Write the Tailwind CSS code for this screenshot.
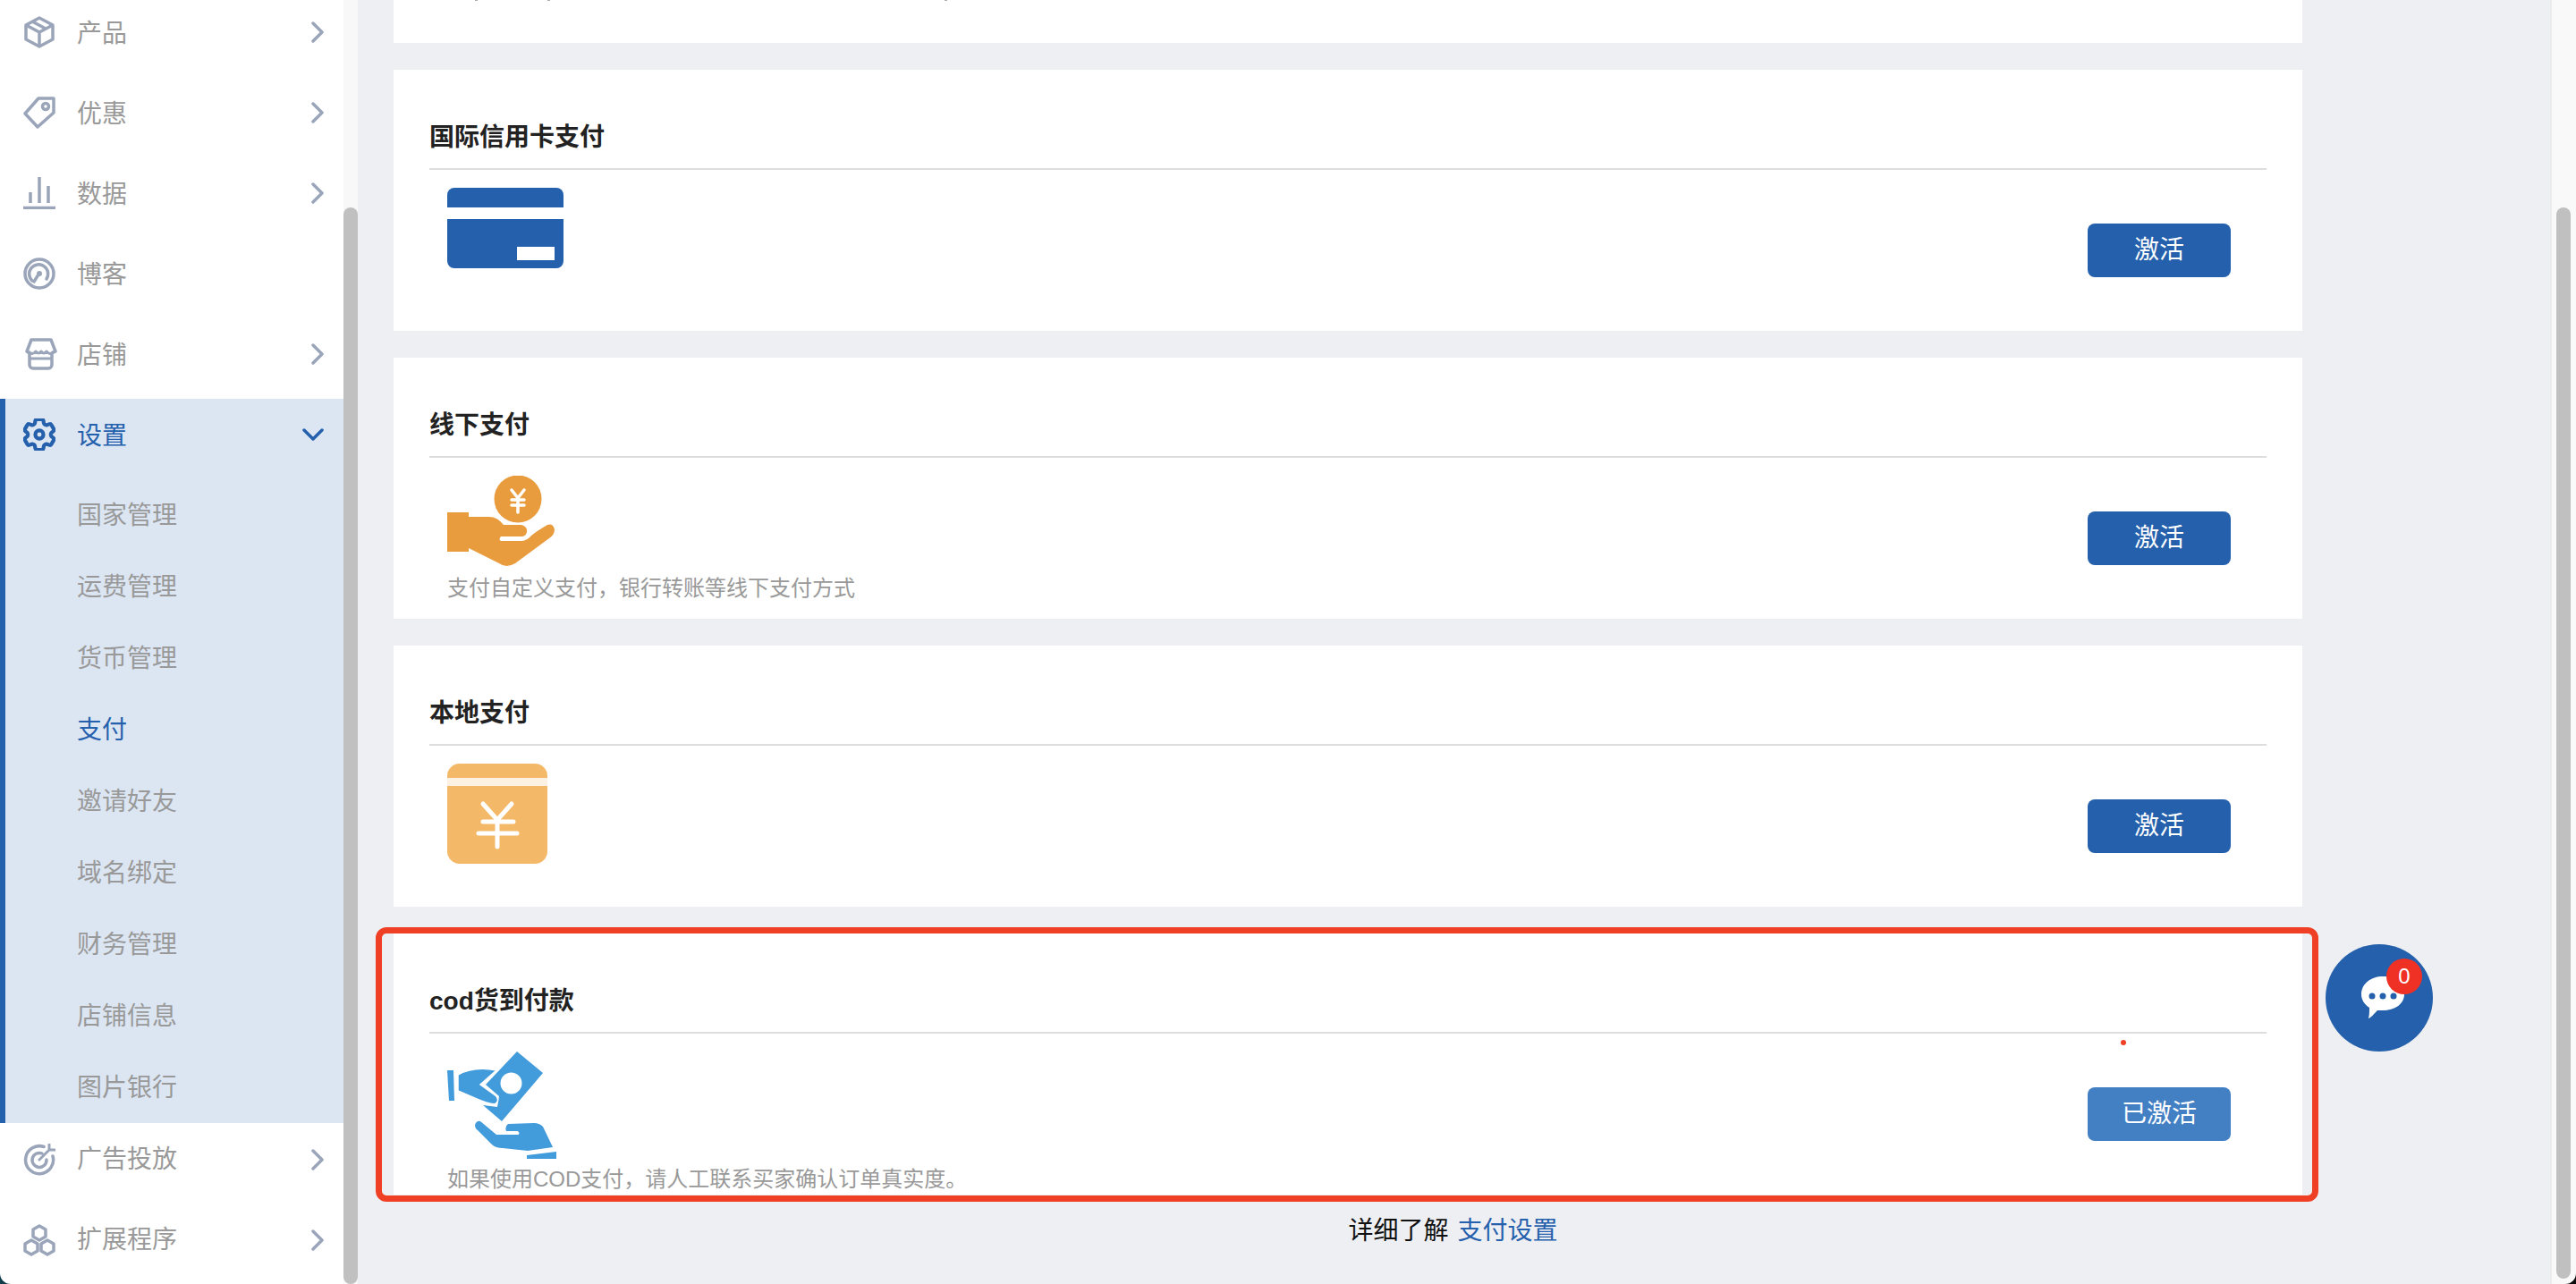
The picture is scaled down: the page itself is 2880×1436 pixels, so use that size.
<!DOCTYPE html>
<html lang="zh-CN">
<head>
  <meta charset="UTF-8" />
  <title>支付设置</title>
  <script src="https://cdn.jsdelivr.net/npm/@tailwindcss/browser@4"></script>
</head>
<body class="bg-linear-to-r from-[#0f3d4a] to-[#0c0c0c] h-[1436px] overflow-hidden font-['Liberation_Sans','Noto_Sans_CJK_SC',sans-serif]">
  <div class="relative flex h-[1436px] overflow-hidden rounded-b-[12px]">

    <!-- Sidebar -->
    <aside class="w-[384px] shrink-0 bg-white overflow-hidden text-[28px] text-[#999999]">
      <div class="-mt-[4px] flex flex-col">
        <a class="flex items-center h-[80px] pl-[26px] pr-[22px]">
          <svg class="w-[36px] h-[36px]" viewBox="0 0 36 36" fill="none" stroke="#9aa5ba" stroke-width="3.500" stroke-linejoin="round"><path d="M18 2 33 10V26L18 34 3 26V10Z"/><path d="M3 10 18 18 33 10M18 18V34M10 6 25 14"/></svg>
          <span class="ml-[24px] pt-[4px] flex-1">产品</span>
          <svg class="w-[14px] h-[24px]" viewBox="0 0 14 24" fill="none" stroke="#9aa5ba" stroke-width="3.5" stroke-linecap="round" stroke-linejoin="round"><path d="M2 2 12 12 2 22"/></svg>
        </a>
        <a class="flex items-center h-[80px] mt-[10px] pl-[26px] pr-[22px]">
          <svg class="w-[36px] h-[36px]" viewBox="0 0 36 36" fill="none" stroke="#9aa5ba" stroke-width="3.500" stroke-linejoin="round"><path d="M17 2H34V18L16 34 2 19Z"/><circle cx="25" cy="11" r="3.5"/></svg>
          <span class="ml-[24px] pt-[4px] flex-1">优惠</span>
          <svg class="w-[14px] h-[24px]" viewBox="0 0 14 24" fill="none" stroke="#9aa5ba" stroke-width="3.5" stroke-linecap="round" stroke-linejoin="round"><path d="M2 2 12 12 2 22"/></svg>
        </a>
        <a class="flex items-center h-[80px] mt-[10px] pl-[26px] pr-[22px]">
          <svg class="w-[36px] h-[36px]" viewBox="0 0 36 36" fill="none" stroke="#9aa5ba" stroke-width="3.500"><path d="M0 34.500H36M8 17V29M18 0V29M28 10V29"/></svg>
          <span class="ml-[24px] pt-[4px] flex-1">数据</span>
          <svg class="w-[14px] h-[24px]" viewBox="0 0 14 24" fill="none" stroke="#9aa5ba" stroke-width="3.5" stroke-linecap="round" stroke-linejoin="round"><path d="M2 2 12 12 2 22"/></svg>
        </a>
        <a class="flex items-center h-[80px] mt-[10px] pl-[26px] pr-[22px]">
          <svg class="w-[36px] h-[36px]" viewBox="0 0 36 36" fill="none" stroke="#9aa5ba" stroke-width="3.500" stroke-linecap="round"><circle cx="18" cy="18" r="16"/><path d="M10 26A10.500 10.500 0 1 1 26 24"/><path d="M12 27 17 19"/><circle cx="18" cy="18" r="3" fill="#9aa5ba" stroke="none"/></svg>
          <span class="ml-[24px] pt-[4px] flex-1">博客</span>
        </a>
        <a class="flex items-center h-[80px] mt-[10px] pl-[26px] pr-[22px]">
          <svg class="w-[36px] h-[36px] translate-x-[2px]" viewBox="0 0 36 36" fill="none" stroke="#9aa5ba" stroke-width="3.500" stroke-linejoin="round"><path d="M7 2H29L34 15 30 17V30A4 4 0 0 1 26 34H9A4 4 0 0 1 5 30V17L2 15Z"/><path d="M4 15Q8 20 12 15 15 19 18 15 21 19 24 15 28 20 32 15M5 23H30" stroke-width="3"/></svg>
          <span class="ml-[24px] pt-[4px] flex-1">店铺</span>
          <svg class="w-[14px] h-[24px]" viewBox="0 0 14 24" fill="none" stroke="#9aa5ba" stroke-width="3.5" stroke-linecap="round" stroke-linejoin="round"><path d="M2 2 12 12 2 22"/></svg>
        </a>

        <!-- 设置 -->
        <div class="mt-[10px] h-[810px] bg-[#dce6f3] border-l-[6px] border-[#2560ac]">
          <a class="flex items-center h-[80px] pl-[20px] pr-[22px] text-[#2560ac]">
            <svg class="w-[36px] h-[36px]" viewBox="2.500 2.500 19 19" fill="none" stroke="#2560ac" stroke-width="2.200"><path d="M9.594 3.940c.09-.542.56-.94 1.110-.94h2.593c.55 0 1.020.398 1.110.94l.213 1.281c.063.374.313.686.645.87.074.04.147.083.22.127.325.196.72.257 1.075.124l1.217-.456a1.125 1.125 0 0 1 1.370.49l1.296 2.247a1.125 1.125 0 0 1-.26 1.431l-1.003.827c-.293.241-.438.613-.43.992a7.723 7.723 0 0 1 0 .255c-.008.378.137.75.43.991l1.004.827c.424.35.534.955.26 1.430l-1.298 2.247a1.125 1.125 0 0 1-1.369.491l-1.217-.456c-.355-.133-.75-.072-1.076.124a6.470 6.470 0 0 1-.22.128c-.331.183-.581.495-.644.869l-.213 1.281c-.09.543-.56.94-1.110.94h-2.594c-.55 0-1.019-.398-1.110-.94l-.213-1.281c-.062-.374-.312-.686-.644-.87a6.520 6.520 0 0 1-.22-.127c-.325-.196-.72-.257-1.076-.124l-1.217.456a1.125 1.125 0 0 1-1.369-.49l-1.297-2.247a1.125 1.125 0 0 1 .26-1.431l1.004-.827c.292-.24.437-.613.43-.991a6.932 6.932 0 0 1 0-.255c.007-.38-.138-.751-.43-.992l-1.004-.827a1.125 1.125 0 0 1-.26-1.430l1.297-2.247a1.125 1.125 0 0 1 1.370-.491l1.216.456c.356.133.751.072 1.076-.124.072-.044.146-.086.22-.128.332-.183.582-.495.644-.869l.214-1.280Z"/><circle cx="12" cy="12" r="2.400"/></svg>
            <span class="ml-[24px] pt-[4px] flex-1">设置</span>
            <svg class="w-[24px] h-[14px]" viewBox="0 0 24 14" fill="none" stroke="#2560ac" stroke-width="3.500" stroke-linecap="round" stroke-linejoin="round"><path d="M2 2 12 12 22 2"/></svg>
          </a>
          <ul class="mt-[9px] pl-[80px]">
            <li class="h-[80px] pt-[4px] flex items-center">国家管理</li>
            <li class="h-[80px] pt-[4px] flex items-center">运费管理</li>
            <li class="h-[80px] pt-[4px] flex items-center">货币管理</li>
            <li class="h-[80px] pt-[4px] flex items-center text-[#2560ac]">支付</li>
            <li class="h-[80px] pt-[4px] flex items-center">邀请好友</li>
            <li class="h-[80px] pt-[4px] flex items-center">域名绑定</li>
            <li class="h-[80px] pt-[4px] flex items-center">财务管理</li>
            <li class="h-[80px] pt-[4px] flex items-center">店铺信息</li>
            <li class="h-[80px] pt-[4px] flex items-center">图片银行</li>
          </ul>
        </div>

        <a class="flex items-center h-[80px] mt-[1px] pl-[26px] pr-[22px]">
          <svg class="w-[36px] h-[36px]" viewBox="0 0 36 36" fill="none" stroke="#9aa5ba" stroke-width="3.500" stroke-linecap="round"><path d="M23 3.500A15.500 15.500 0 1 0 33 14"/><path d="M21 11A8 8 0 1 0 26 18"/><path d="M18 18 29 7M29 1V7H35" stroke-width="3"/></svg>
          <span class="ml-[24px] flex-1">广告投放</span>
          <svg class="w-[14px] h-[24px]" viewBox="0 0 14 24" fill="none" stroke="#9aa5ba" stroke-width="3.5" stroke-linecap="round" stroke-linejoin="round"><path d="M2 2 12 12 2 22"/></svg>
        </a>
        <a class="flex items-center h-[80px] mt-[10px] pl-[26px] pr-[22px]">
          <svg class="w-[36px] h-[36px]" viewBox="0 0 36 36" fill="none" stroke="#9aa5ba" stroke-width="3.500" stroke-linejoin="round"><path d="M18 2 25 6V14L18 18 11 14V6Z"/><path d="M9 18 16 22V30L9 34 2 30V22Z"/><path d="M27 18 34 22V30L27 34 20 30V22Z"/></svg>
          <span class="ml-[24px] flex-1">扩展程序</span>
          <svg class="w-[14px] h-[24px]" viewBox="0 0 14 24" fill="none" stroke="#9aa5ba" stroke-width="3.5" stroke-linecap="round" stroke-linejoin="round"><path d="M2 2 12 12 2 22"/></svg>
        </a>
      </div>
    </aside>

    <!-- Sidebar scrollbar -->
    <div class="w-[16px] shrink-0 bg-[#f8f8f8]">
      <div class="mt-[232px] h-[1204px] rounded-[8px] bg-[#c0c0c0]"></div>
    </div>

    <!-- Main -->
    <main class="flex-1 bg-[#eeeff3] pl-[40px]">
      <div class="w-[2134px] flex flex-col gap-[30px]">
        <div class="relative h-[48px] bg-white">
          <div class="absolute top-0 left-[91px] w-[3px] h-[1px] bg-[#aaaaaa]"></div>
          <div class="absolute top-0 left-[172px] w-[3px] h-[1px] bg-[#aaaaaa]"></div>
          <div class="absolute top-0 left-[616px] w-[3px] h-[1px] bg-[#aaaaaa]"></div>
        </div>

        <section class="h-[292px] bg-white px-[40px]">
          <h2 class="pt-[56px] pb-[14px] h-[112px] border-b-2 border-[#dddddd] text-[28px] leading-[40px] font-bold text-[#222222]">国际信用卡支付</h2>
          <div class="flex justify-between pl-[20px] pr-[40px]">
            <svg class="mt-[20px] w-[130px] h-[90px]" viewBox="0 0 130 90"><path d="M0 22V8A8 8 0 0 1 8 0H122A8 8 0 0 1 130 8V22Z" fill="#2560ac"/><path fill-rule="evenodd" d="M0 35H130V82A8 8 0 0 1 122 90H8A8 8 0 0 1 0 82ZM78 66V81H120V66Z" fill="#2560ac"/></svg>
            <button class="mt-[60px] w-[160px] h-[60px] rounded-[8px] bg-[#2560ac] text-white text-[28px]">激活</button>
          </div>
        </section>

        <section class="h-[292px] bg-white px-[40px]">
          <h2 class="pt-[56px] pb-[14px] h-[112px] border-b-2 border-[#dddddd] text-[28px] leading-[40px] font-bold text-[#222222]">线下支付</h2>
          <div class="flex justify-between pl-[20px] pr-[40px]">
            <div class="pt-[20px]">
              <svg class="w-[120px] h-[102px]" viewBox="0 0 120 102">
                <circle cx="79" cy="26" r="26.500" fill="#e99c3e"/>
                <path d="M72 16 79 25 86 16M72 27H86M72 33H86M79 25V41" fill="none" stroke="#fff" stroke-width="3.500" stroke-linecap="round"/>
                <path d="M0 41H24V46H47Q56 46 63 55H83Q90 57 89 63 88 68 83 68H60Q57 71 60 73H84Q90 72 94 67 100 62 112 55 118 53 120 60 120 66 114 70L76 98Q66 104 58 98L24 81V85H0Z" fill="#e99c3e"/>
              </svg>
              <p class="mt-[8px] text-[24px] leading-[32px] text-[#999999]">支付自定义支付，银行转账等线下支付方式</p>
            </div>
            <button class="mt-[60px] w-[160px] h-[60px] rounded-[8px] bg-[#2560ac] text-white text-[28px]">激活</button>
          </div>
        </section>

        <section class="h-[292px] bg-white px-[40px]">
          <h2 class="pt-[56px] pb-[14px] h-[112px] border-b-2 border-[#dddddd] text-[28px] leading-[40px] font-bold text-[#222222]">本地支付</h2>
          <div class="flex justify-between pl-[20px] pr-[40px]">
            <svg class="mt-[20px] w-[112px] h-[112px]" viewBox="0 0 112 112">
              <rect width="112" height="112" rx="14" fill="#f4b968"/>
              <rect y="16" width="112" height="9" fill="#fdf1e3"/>
              <path d="M40 45 56 63 72 45M40 65H74M35 78H78M56 63V93" fill="none" stroke="#fff" stroke-width="5" stroke-linecap="round"/>
            </svg>
            <button class="mt-[60px] w-[160px] h-[60px] rounded-[8px] bg-[#2560ac] text-white text-[28px]">激活</button>
          </div>
        </section>

        <section class="h-[292px] bg-white px-[40px]">
          <h2 class="pt-[56px] pb-[14px] h-[112px] border-b-2 border-[#dddddd] text-[28px] leading-[40px] font-bold text-[#222222]">cod货到付款</h2>
          <div class="flex justify-between pl-[20px] pr-[40px]">
            <div class="pt-[20px]">
              <svg class="w-[122px] h-[120px]" viewBox="0 0 122 120">
                <path d="M78 0 107 24 61 78 40 60 56 62 58 50 43 37Z" fill="#429bdb"/>
                <circle cx="71.500" cy="35.500" r="12" fill="#fff"/>
                <path d="M0 21 7 21 8 55 2 55Z" fill="#429bdb"/>
                <path d="M12 26Q30 16 55 21L37 37 55 50Q59 56 53 59 44 58 33 53L12 44Z" fill="#429bdb" stroke="#fff" stroke-width="1.500"/>
                <path d="M37 78Q33 77 31 82 31 86 34 88L50 104Q54 108 62 108L90 111 118 107 107 84Q103 80 97 80L68 81Q64 84 66 89H79Q82 92 79 93H55Z" fill="#429bdb"/>
                <path d="M89 116 122 112V120H89Z" fill="#429bdb"/>
              </svg>
              <p class="mt-[7px] text-[24px] leading-[32px] text-[#999999]">如果使用COD支付，请人工联系买家确认订单真实度。</p>
            </div>
            <button class="mt-[60px] w-[160px] h-[60px] rounded-[8px] bg-[#437fc3] text-white text-[28px]">已激活</button>
          </div>
        </section>
      </div>

      <p class="mt-[26px] -ml-[42px] text-center text-[28px] leading-[30px] text-[#111111]">详细了解 <a class="ml-[2px] text-[#2560ac]">支付设置</a></p>
    </main>

    <!-- Main scrollbar -->
    <div class="w-[29px] shrink-0 bg-[#f9f9f9] border-l-2 border-[#ececec] pl-[5px]">
      <div class="mt-[232px] w-[16px] h-[1198px] rounded-[8px] bg-[#c0c0c0]"></div>
    </div>

    <!-- Red annotation over the COD card -->
    <div class="absolute left-[420px] top-[1037px] w-[2172px] h-[307px] border-[7px] border-[#ef4026] rounded-[12px] pointer-events-none"></div>
    <div class="absolute left-[2371px] top-[1163px] w-[6px] h-[6px] rounded-full bg-[#ef4026]"></div>

    <!-- Chat button -->
    <button class="absolute left-[2600px] top-[1056px] w-[120px] h-[120px] rounded-full bg-[#2560ac] flex items-center justify-center">
      <svg class="ml-[8px] w-[48px] h-[48px]" viewBox="0 0 48 48"><path d="M24 0C37 0 48 8 48 20 48 31 37 38 24 38 22 38 20 38 18 38 14 42 11 46 8 47 9 43 9 39 9 35 3 31 0 26 0 20 0 8 11 0 24 0Z" fill="#fff"/><circle cx="12" cy="22" r="3.500" fill="#2560ac"/><circle cx="24" cy="22" r="3.500" fill="#2560ac"/><circle cx="36" cy="22" r="3.500" fill="#2560ac"/></svg>
      <span class="absolute left-[68px] top-[16px] w-[40px] h-[40px] rounded-full bg-[#ee3124] text-white text-[24px] leading-[40px] text-center">0</span>
    </button>
  </div>
</body>
</html>
